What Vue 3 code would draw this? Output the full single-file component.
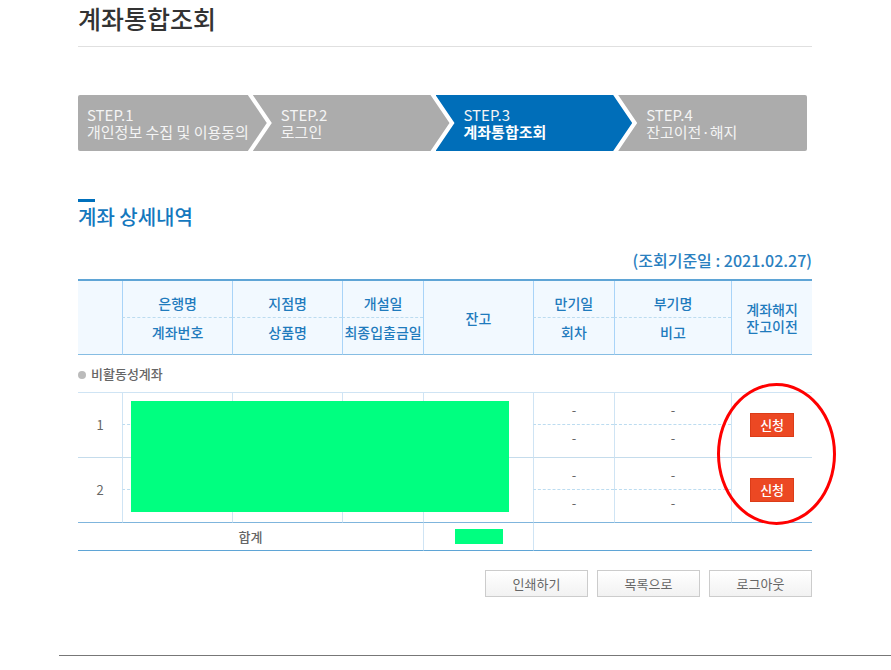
<template>
  <main class="page">
    <div class="content">
      <h1 class="page-title">계좌통합조회</h1>

      <ol class="steps">
        <li v-for="(step, i) in steps" :key="step" :class="['step', { active: i === 2 }]">
          <span>STEP.{{ i + 1 }}</span>
          <span class="step-name">{{ step }}</span>
        </li>
      </ol>

      <h2 class="section-title">계좌 상세내역</h2>
      <p class="base-date">(조회기준일 : 2021.02.27)</p>

      <div class="table-wrap">
        <table class="accounts">
          <colgroup>
            <col class="w-no" />
            <col class="w-lg" />
            <col class="w-lg" />
            <col class="w-md" />
            <col class="w-lg" />
            <col class="w-md" />
            <col class="w-xl" />
            <col class="w-md" />
          </colgroup>
          <thead>
            <tr class="upper">
              <td rowspan="2" class="full"></td>
              <th scope="col">은행명</th>
              <th scope="col">지점명</th>
              <th scope="col">개설일</th>
              <th scope="col" rowspan="2" class="full">잔고</th>
              <th scope="col">만기일</th>
              <th scope="col">부기명</th>
              <th scope="col" rowspan="2" class="full close">계좌해지<br />잔고이전</th>
            </tr>
            <tr class="lower">
              <th scope="col">계좌번호</th>
              <th scope="col">상품명</th>
              <th scope="col">최종입출금일</th>
              <th scope="col">회차</th>
              <th scope="col">비고</th>
            </tr>
          </thead>
          <tbody>
            <tr class="group">
              <th colspan="8" scope="rowgroup"><span class="dot"></span>비활동성계좌</th>
            </tr>
            <template v-for="no in accounts" :key="no">
              <tr class="upper">
                <td rowspan="2" class="full">{{ no }}</td>
                <td></td>
                <td></td>
                <td></td>
                <td rowspan="2" class="full"></td>
                <td>-</td>
                <td>-</td>
                <td rowspan="2" class="full">
                  <button type="button" class="btn-apply">신청</button>
                </td>
              </tr>
              <tr class="lower">
                <td></td>
                <td></td>
                <td></td>
                <td>-</td>
                <td>-</td>
              </tr>
            </template>
          </tbody>
          <tfoot>
            <tr>
              <th colspan="4" scope="row">합계</th>
              <td><span class="mask-total"></span></td>
              <td colspan="3"></td>
            </tr>
          </tfoot>
        </table>
        <div class="mask"></div>
        <div class="marker"></div>
      </div>

      <div class="actions">
        <button v-for="label in actions" :key="label" type="button" class="btn">{{ label }}</button>
      </div>
    </div>
    <hr class="bottom-line" />
  </main>
</template>

<script setup>
const steps = ['개인정보 수집 및 이용동의', '로그인', '계좌통합조회', '잔고이전·해지']
const accounts = [1, 2]
const actions = ['인쇄하기', '목록으로', '로그아웃']
</script>

<style>
body {
  margin: 0;
  background: #fff;
}
</style>

<style scoped>
.page {
  font-family: "Noto Sans CJK KR", sans-serif;
  font-size: 13px;
  line-height: 20px;
  color: #666;
}

.content {
  padding: 0 79px 0 78px;
}

.page-title {
  margin: 0;
  padding-bottom: 10px;
  border-bottom: 1px solid #e0e0e0;
  font-size: 25px;
  line-height: 36px;
  font-weight: 500;
  color: #333;
}

.steps {
  display: flex;
  margin: 48px 5px 0 0;
  padding: 0;
  list-style: none;
  border-radius: 2px;
  overflow: hidden;
}

.step {
  flex: 25 1 0;
  min-width: 0;
  display: flex;
  flex-direction: column;
  justify-content: center;
  height: 56px;
  margin-left: -14px;
  background: #acacac;
  color: #f4f4f4;
  font-size: 15px;
  line-height: 17px;
  white-space: nowrap;
  clip-path: polygon(0 0, calc(100% - 19px) 0, 100% 50%, calc(100% - 19px) 100%, 0 100%, 19px 50%);
}

.step span {
  padding-left: 28px;
}

.step:first-child {
  flex-grow: 24;
  margin-left: 0;
  clip-path: polygon(0 0, calc(100% - 19px) 0, 100% 50%, calc(100% - 19px) 100%, 0 100%);
}

.step:first-child span {
  padding-left: 9px;
}

.step:last-child {
  flex-grow: 24;
  clip-path: polygon(0 0, 100% 0, 100% 100%, 0 100%, 19px 50%);
}

.step.active {
  background: #006eb9;
}

.active .step-name {
  color: #fff;
  font-weight: 700;
}

.section-title {
  margin: 48px 0 0;
  font-size: 20px;
  line-height: 30px;
  font-weight: 500;
  color: #1478be;
}

.section-title::before {
  content: "";
  display: block;
  width: 17px;
  height: 3px;
  background: #0070bc;
}

.base-date {
  margin: 16px 0 7px;
  font-size: 16px;
  line-height: 24px;
  font-weight: 500;
  text-align: right;
  color: #2a80bf;
}

.table-wrap {
  position: relative;
}

.accounts {
  width: 100%;
  table-layout: fixed;
  border-collapse: separate;
  border-spacing: 0;
  border-top: 2px solid #5fa5d6;
  text-align: center;
}

.w-no {
  width: 6%;
}

.w-md {
  width: 11%;
}

.w-lg {
  width: 15%;
}

.w-xl {
  width: 16%;
}

.accounts th,
.accounts td {
  padding: 0;
  font-weight: 400;
  border-left: 1px solid #cfe4f4;
}

.accounts tr:not(.lower) > :first-child {
  border-left: 0;
}

.accounts thead th,
.accounts thead td {
  background: #f2f9ff;
  border-left-color: #a9d4f8;
  color: #1f7bbd;
  font-size: 14px;
  font-weight: 500;
  white-space: nowrap;
}

.accounts .close {
  line-height: 17px;
}

.accounts .upper > :not(.full) {
  padding: 7px 0 4px;
  height: 20px;
  border-bottom: 1px dashed #bcdcf0;
}

.accounts .lower > * {
  padding: 3px 0 9px;
  height: 20px;
  border-bottom: 1px solid #c5dcec;
}

.accounts .upper > .full {
  border-bottom: 1px solid #c5dcec;
}

.accounts thead .upper > :not(.full) {
  padding: 12px 0 4px;
}

.accounts thead .lower > * {
  padding: 4px 0 12px;
}

.accounts thead .lower > *,
.accounts thead .upper > .full {
  border-bottom-color: #86bde3;
}

.accounts tbody .upper:nth-last-child(2) > .full,
.accounts tbody .lower:last-child > * {
  border-bottom-color: #7fb5dd;
}

.accounts .group th {
  height: 37px;
  text-align: left;
  font-weight: 500;
  border-bottom: 1px solid #cfe4f4;
}

.dot {
  display: inline-block;
  width: 8px;
  height: 8px;
  margin-right: 5px;
  border-radius: 50%;
  background: #bbb;
}

.accounts tfoot th,
.accounts tfoot td {
  height: 27px;
  border-bottom: 1px solid #5fa5d6;
}

.accounts tfoot th {
  font-weight: 500;
}

.mask-total {
  display: block;
  width: 48px;
  height: 15px;
  margin: 0 auto;
  background: #00ff80;
}

.mask {
  position: absolute;
  top: 122px;
  bottom: 39px;
  left: 53px;
  width: 51.5%;
  background: #00ff80;
}

.marker {
  position: absolute;
  box-sizing: border-box;
  top: 104px;
  right: -24px;
  width: 119px;
  height: 142px;
  border: 3px solid #f00;
  border-radius: 50%;
  pointer-events: none;
}

.btn-apply {
  width: 44px;
  height: 24px;
  padding: 0;
  border: 1px solid #dc3c18;
  background: #ec4823;
  color: #fff;
  font: inherit;
  font-weight: 500;
  line-height: 20px;
  cursor: pointer;
}

.actions {
  display: flex;
  justify-content: flex-end;
  gap: 9px;
  margin-top: 19px;
}

.btn {
  width: 103px;
  height: 27px;
  padding: 0;
  border: 1px solid #ccc;
  background: linear-gradient(#fff, #f2f2f2);
  color: #666;
  font: inherit;
  cursor: pointer;
}

.bottom-line {
  margin: 58px 0 0 59px;
  border: 0;
  border-top: 1px solid #777;
}
</style>
